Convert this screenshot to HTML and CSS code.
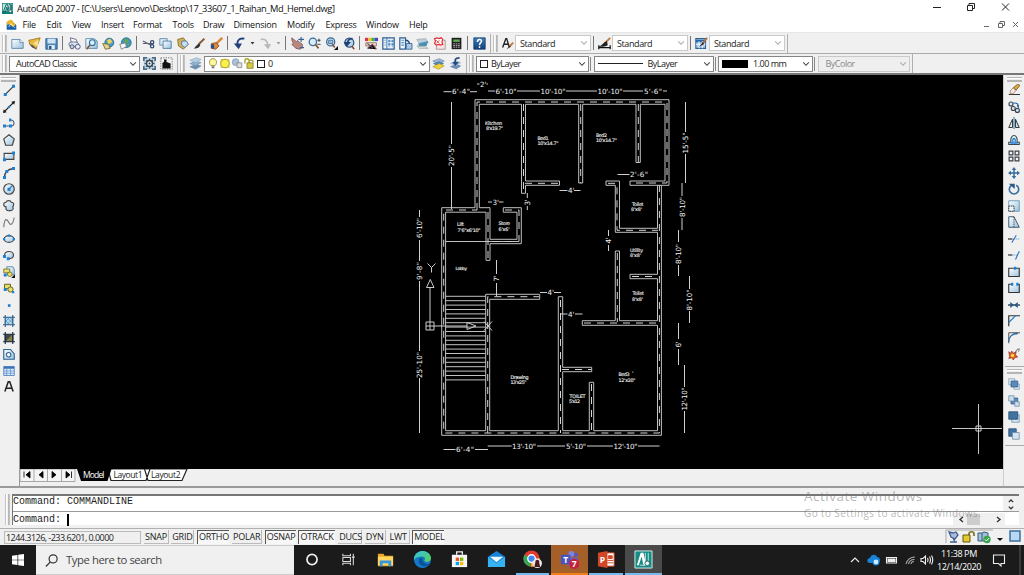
FILE: index.html
```html
<!DOCTYPE html>
<html lang="en">
<head>
<meta charset="utf-8">
<title>AutoCAD 2007</title>
<link rel="stylesheet" href="styles.css">
</head>
<body>
<svg class="sprite" xmlns="http://www.w3.org/2000/svg">
  <defs>
    <linearGradient id="pg" x1="0" y1="0" x2="1" y2="1"><stop offset="0" stop-color="#fff"/><stop offset="1" stop-color="#9cc3de"/></linearGradient>
    <linearGradient id="bl" x1="0" y1="0" x2="0" y2="1"><stop offset="0" stop-color="#3f7fbd"/><stop offset="1" stop-color="#0d3f78"/></linearGradient>
    <linearGradient id="eg" x1="0" y1="0" x2="1" y2="1"><stop offset="0" stop-color="#2fc3e8"/><stop offset="1" stop-color="#5fd04e"/></linearGradient>
  </defs>
  <symbol id="acad" viewBox="0 0 16 16"><path d="M0 0h16v16H0z" fill="#0f7f7a"/><path d="M1 1h14v11H1z" fill="#bfe6df"/><path d="M2 13L6 2h2l3 11H9L7 6l-2 7zM10 2h2v7l2 1V2" fill="none" stroke="#07625f" stroke-width="1.4"/><circle cx="12" cy="12" r="2" fill="#e9f7f4" stroke="#145f5c"/></symbol>
  <symbol id="dwg" viewBox="0 0 16 16"><path d="M1 4h9l5 4v7H1z" fill="#1660ad"/><path d="M2 2l6-2 6 8-4 3L5 7 1 8z" fill="#f0b429"/><path d="M4 11l3-5 6 6" fill="none" stroke="#fff"/></symbol>
  <symbol id="new" viewBox="0 0 16 16"><path d="M1 3h10l4 4v7H1z" fill="url(#pg)" stroke="#4d7fa3"/><path d="M11 3v4h4" fill="#fff" stroke="#4d7fa3"/></symbol>
  <symbol id="open" viewBox="0 0 16 16"><path d="M1 4l5-1 9-2-3 8-2 6-8-6z" fill="#e6b83c" stroke="#9b741a"/><path d="M6 8l7-5-1 9z" fill="#f8df8b"/><path d="M2 9l4 1 5 5-6-2z" fill="#555"/></symbol>
  <symbol id="save" viewBox="0 0 16 16"><path d="M1 2h14v13H1z" fill="#4f86b8" stroke="#27588a"/><path d="M3 2h10v6H3z" fill="#cfe4f6"/><path d="M4 10h8v5H4z" fill="#e8eef4"/><path d="M5 11h3v4H5z" fill="#27588a"/></symbol>
  <symbol id="print" viewBox="0 0 16 16"><path d="M3 1l7 2 2 5-8-1z" fill="#fff" stroke="#557"/><ellipse cx="7" cy="9" rx="6" ry="3" fill="#dfe7f2" stroke="#445a7d"/><circle cx="5" cy="12" r="2.5" fill="#bcd" stroke="#446"/><circle cx="12" cy="12" r="3" fill="#e9eef7" stroke="#446"/></symbol>
  <symbol id="prev" viewBox="0 0 16 16"><path d="M1 2h10l4 3v9H1z" fill="url(#pg)" stroke="#4d7fa3"/><circle cx="9" cy="7" r="3.5" fill="#d9f0ff" stroke="#2c6799" stroke-width="1.3"/><path d="M6 10l-4 5" stroke="#8d5a32" stroke-width="2"/></symbol>
  <symbol id="publish" viewBox="0 0 16 16"><circle cx="9" cy="7" r="5.5" fill="#4c9bc9" stroke="#20608c"/><path d="M6 4l4-2 3 4-5 3z" fill="#eed54e"/><path d="M1 8l7 1 2 5-6 1z" fill="#e6d68d" stroke="#746321"/></symbol>
  <symbol id="globe" viewBox="0 0 16 16"><circle cx="9" cy="7" r="6" fill="#3e97c4" stroke="#1f6a91"/><path d="M6 3l4-1 2 4-3 2zM9 9l4-1-1 4z" fill="#68a843"/><path d="M1 9l7-2 1 5-6 3z" fill="#f3f6fa" stroke="#777"/></symbol>
  <symbol id="cut" viewBox="0 0 16 16"><path d="M1 5l10 5M1 8h10" stroke="#5f6670" stroke-width="1.500"/><circle cx="12.500" cy="6.500" r="2" fill="none" stroke="#334770" stroke-width="1.500"/><circle cx="12.500" cy="11.500" r="2" fill="none" stroke="#334770" stroke-width="1.500"/></symbol>
  <symbol id="copy" viewBox="0 0 16 16"><path d="M1 2h9v8H1z" fill="#dcebf6" stroke="#5181a5"/><path d="M5 5h10v9H5z" fill="url(#pg)" stroke="#3f729b"/></symbol>
  <symbol id="paste" viewBox="0 0 16 16"><path d="M2 3l7-2 6 8-6 6-6-4z" fill="#d3b257" stroke="#80672a"/><path d="M7 5h6l2 4-4 4-4-3z" fill="#c9dcf0" stroke="#4974a0"/></symbol>
  <symbol id="brush" viewBox="0 0 16 16"><path d="M14 2L7 9" stroke="#8a5a35" stroke-width="2.5"/><path d="M8 8l1 2c-2 4-5 4-8 4 3-2 3-5 7-6z" fill="#333"/></symbol>
  <symbol id="bedit" viewBox="0 0 16 16"><path d="M15 1L8 8" stroke="#e0842c" stroke-width="3"/><path d="M2 8l6-1 3 4-4 4-5-1z" fill="#d98a3b" stroke="#8a3e15"/><path d="M1 9h4v5H1z" fill="#2e4f82"/></symbol>
  <symbol id="undo" viewBox="0 0 16 16"><path d="M14 2C7 1 4 5 6 12" fill="none" stroke="#223f7c" stroke-width="2.2"/><path d="M1 8h10l-4 7z" fill="#223f7c"/></symbol>
  <symbol id="redo" viewBox="0 0 16 16"><path d="M2 3c6-1 9 2 9 8" fill="none" stroke="#b8b8b8" stroke-width="2"/><path d="M6 9h9l-4 6z" fill="#b8b8b8"/></symbol>
  <symbol id="pan" viewBox="0 0 16 16"><path d="M1 1l6 5 1-2 3 3 3 2v4l-3 2-5-1-5-5 2-1-2-4z" fill="#b98780" stroke="#805856"/><path d="M9 3h7M12.500 0v6M11 13h5" stroke="#33629b" stroke-width="1.400"/></symbol>
  <symbol id="zoomr" viewBox="0 0 16 16"><circle cx="6" cy="6" r="4.5" fill="#d8ecfa" stroke="#356a98" stroke-width="1.5"/><path d="M9 9l4 5" stroke="#805332" stroke-width="2"/><path d="M11.500 4h4M13.500 2v4M11.500 9h4" stroke="#222"/></symbol>
  <symbol id="zoomw" viewBox="0 0 16 16"><circle cx="7" cy="6" r="5" fill="#c5e0f3" stroke="#356a98" stroke-width="1.5"/><path d="M4.500 4h5v4h-5z" fill="#9dbcd5" stroke="#446b90"/><path d="M9 9l3 4" stroke="#805332" stroke-width="2"/><path d="M16 11v5h-5z" fill="#111"/></symbol>
  <symbol id="zoomp" viewBox="0 0 16 16"><circle cx="9" cy="7" r="5.500" fill="#b9d8ee" stroke="#31577f" stroke-width="1.600"/><path d="M13 2C8 2 7 4 7 8" fill="none" stroke="#203f78" stroke-width="2.200"/><path d="M2 6h9L6 12z" fill="#203f78"/><path d="M12 11l3 4" stroke="#805332" stroke-width="2"/></symbol>
  <symbol id="props" viewBox="0 0 16 16"><path d="M0 1h4v4H0z" fill="#e22f50"/><path d="M4 1h4v4H4z" fill="#f2c320"/><path d="M8 1h4v4H8z" fill="#32b34a"/><path d="M12 1h4v4h-4z" fill="#5141c9"/><path d="M1 7h13v4H1z" fill="#f4e0d0" stroke="#8d6257"/><path d="M3 14l6-5 5 6M3 8l7 6" stroke="#6b4c5e" stroke-width="1.3"/></symbol>
  <symbol id="dc" viewBox="0 0 16 16"><path d="M1 1h14v14H1z" fill="#edf5fb" stroke="#315f91" stroke-width="1.5"/><path d="M6 1v14" stroke="#315f91"/><path d="M2 4h3M2 7h3M2 10h3M8 4h2v2H8zM12 4h2v2h-2zM8 8h2v2H8zM12 8h2v2h-2zM8 12h2M12 12h2" fill="#4b8bc2" stroke="#4b8bc2" stroke-width=".7"/></symbol>
  <symbol id="tp" viewBox="0 0 16 16"><path d="M1 1h7v14H1z" fill="#edf5fb" stroke="#315f91" stroke-width="1.5"/><path d="M3 4h3M3 7h3M3 10h3" stroke="#4b8bc2" stroke-width="1.5"/><path d="M8 4c4 0 5 2 5 6" fill="none" stroke="#1f4a80" stroke-width="1.6"/><path d="M9 8h7v7H9z" fill="#a9c9e4" stroke="#315f91"/></symbol>
  <symbol id="ssm" viewBox="0 0 16 16"><path d="M1 3l11-1 3 5-11 1z" fill="#bcd0dc" stroke="#9cadb9"/><path d="M3 8l12-3-2 6-10 2z" fill="#4d8fb3"/><path d="M1 11l11 1 3 2H4z" fill="#d9dfd8" stroke="#a6b1b8"/></symbol>
  <symbol id="markup" viewBox="0 0 16 16"><path d="M5 4h10v11H4z" fill="#f7e4e4" stroke="#9f8a8a"/><path d="M2 2l3-1 2 1 3-1 2 2-1 3 1 3-3 1-2-1-3 1-2-2 1-3z" fill="#fff" stroke="#e22e34" stroke-width="1.5"/><path d="M4 4l4 4M8 4L4 8" stroke="#e22e34"/></symbol>
  <symbol id="calc" viewBox="0 0 16 16"><path d="M2 1h12v14H2z" fill="#221d1d"/><path d="M4 3h8v3H4z" fill="#5fae55"/><path d="M4 8h2v1H4zM7 8h2v1H7zM10 8h2v1h-2zM4 10h2v1H4zM7 10h2v1H7zM10 10h2v1h-2zM4 12h2v1H4zM7 12h2v1H7zM10 12h2v1h-2z" fill="#ddd"/></symbol>
  <symbol id="help" viewBox="0 0 16 16"><path d="M1 1h14v14H1z" fill="url(#bl)" stroke="#163f6b"/><path d="M5.500 6c0-4 5-3.500 5-1 0 2-2.500 2-2.500 5M8 11.500v2" fill="none" stroke="#fff" stroke-width="1.8"/></symbol>
  <symbol id="tstyle" viewBox="0 0 16 16"><path d="M2 13L6 2h1l3 10M4 9h5" fill="none" stroke="#222" stroke-width="1.7"/><path d="M15 7l-5 5" stroke="#c07a3e" stroke-width="2.2"/><path d="M11 10l-4 5 5-3z" fill="#222"/></symbol>
  <symbol id="dstyle" viewBox="0 0 16 16"><path d="M1 10v5M15 10v5M1 13h14" stroke="#111" stroke-width="1.5"/><path d="M15 1L8 8" stroke="#c07a3e" stroke-width="2.200"/><path d="M11 5l1 5c-3 2-9 2-12 2 5-1 6-5 11-7z" fill="#222"/></symbol>
  <symbol id="tbstyle" viewBox="0 0 16 16"><path d="M1 2h12v12H1z" fill="#a7cbea" stroke="#2d6293" stroke-width="1.300"/><path d="M1 5h12" stroke="#2867ab" stroke-width="3"/><path d="M1 9h12M5 5v9M9 5v9" stroke="#fff"/><path d="M15 1L9 8" stroke="#b7713a" stroke-width="2.200"/><path d="M10 6l1 3-6 3z" fill="#222"/></symbol>
  <symbol id="gearbox" viewBox="0 0 16 16"><path d="M0 0h16v16H0z" fill="#4a6c87"/><path d="M2 2h12v12H2z" fill="#c3d3df"/><path d="M0 5h2v6H0zM14 5h2v6h-2zM5 0h6v2H5zM5 14h6v2H5z" fill="#dbe5ec"/><circle cx="8" cy="8" r="3.700" fill="#eef3f6" stroke="#344b5e" stroke-width="1.800"/><circle cx="8" cy="8" r="1.200" fill="#263b4c"/><path d="M8 2v2.500M8 11.500V14M2 8h2.500M11.500 8H14M4 4l1.500 1.500M10.500 10.500L12 12M12 4l-1.500 1.500M4 12l1.500-1.500" stroke="#344b5e" stroke-width="1.400"/></symbol>
  <symbol id="house" viewBox="0 0 16 16"><path d="M1 1h14v14H1z" fill="none" stroke="#555" stroke-dasharray="1.500 1.500"/><path d="M3 14V7l2-1V3h3v3l5 2v6z" fill="#111"/></symbol>
  <symbol id="layers" viewBox="0 0 16 16"><path d="M1 12l8-3 6 2-7 4z" fill="#6f8faf" stroke="#6584a3" stroke-width=".6"/><path d="M1 8l8-3 6 2-7 4z" fill="#8fb1d1" stroke="#6584a3" stroke-width=".6"/><path d="M1 4l8-3 6 2-7 4z" fill="#b7cfe4" stroke="#7d9bb9" stroke-width=".6"/></symbol>
  <symbol id="laym" viewBox="0 0 16 16"><path d="M1 5l8-3 6 3-7 4z" fill="#9dbcd8" stroke="#587393" stroke-width=".7"/><path d="M1 8l8-3 6 3-7 4z" fill="#5283b7"/><path d="M1 12l8-4 6 3-7 4z" fill="#f0d33c" stroke="#a98e1c" stroke-width=".7"/></symbol>
  <symbol id="layp" viewBox="0 0 16 16"><path d="M1 12l8-4 6 3-6 4z" fill="#6c8fb4"/><path d="M1 8l8-4 6 3-6 4z" fill="#a2bfd9"/><path d="M13 1C7 1 7 4 8 8" fill="none" stroke="#27487e" stroke-width="2"/><path d="M4 6h8l-4 5z" fill="#27487e"/></symbol>
  <symbol id="bulb" viewBox="0 0 16 16"><path d="M5 11C1 7 3 1 8 1s7 6 3 10z" fill="#fdf6a5" stroke="#978c31" stroke-width="1.300"/><path d="M6 12h4v3H6z" fill="#777"/></symbol>
  <symbol id="sun" viewBox="0 0 16 16"><path d="M1.500 1.500h13v13h-13z" fill="#d8cf72"/><circle cx="8" cy="8" r="6.300" fill="#f8f14c" stroke="#a28d1d" stroke-width="1.200"/></symbol>
  <symbol id="vp" viewBox="0 0 16 16"><circle cx="6" cy="6" r="5" fill="#a9c2d8" stroke="#7894ad"/><path d="M8 7h7v7H8z" fill="#ddd" stroke="#778"/></symbol>
  <symbol id="lock" viewBox="0 0 16 16"><path d="M2 8V4c0-4 6-4 6 0M8 8V6c0-4 6-4 6 0" fill="none" stroke="#a9a12c" stroke-width="2"/><path d="M5 7h9v8H5z" fill="#d4ca3d" stroke="#77701c"/></symbol>
  <symbol id="chev" viewBox="0 0 10 10"><path d="M1.500 3L5 6.700 8.500 3" fill="none" stroke="currentColor" stroke-width="1.300"/></symbol>
  <symbol id="line" viewBox="0 0 16 16"><path d="M3 14L14 3" stroke="#444" stroke-width="1.500"/><path d="M1 12h4v4H1zM12 1h4v4h-4z" fill="#1f7fd0"/></symbol>
  <symbol id="xline" viewBox="0 0 16 16"><path d="M1 15L15 1" stroke="#222" stroke-width="1.500"/><path d="M0 16l1-5 4 4zM16 0l-1 5-4-4z" fill="#222"/><path d="M6.500 6.500h3v3h-3z" fill="#1f7fd0"/></symbol>
  <symbol id="pline" viewBox="0 0 16 16"><path d="M1 12h10c5 0 5-8-1-8" fill="none" stroke="#445b70" stroke-width="1.500"/><path d="M0 10h4v4H0zM8 10h4v4H8zM8 2h3v4H8z" fill="#1f7fd0"/></symbol>
  <symbol id="poly" viewBox="0 0 16 16"><path d="M8 1l7 5.500L12.500 15h-9L1 6.500z" fill="url(#pg)" stroke="#444" stroke-width="1.600"/></symbol>
  <symbol id="rect" viewBox="0 0 16 16"><path d="M1.500 4.500h13v8h-13z" fill="url(#pg)" stroke="#444" stroke-width="1.500"/><path d="M0 11h4v4H0zM12 2h4v4h-4z" fill="#1f7fd0"/></symbol>
  <symbol id="arc" viewBox="0 0 16 16"><path d="M2 14C2 7 6 3 14 2" fill="none" stroke="#444" stroke-width="1.700"/><path d="M0 12h4v4H0zM3 4h4v4H3zM12 0h4v4h-4z" fill="#1f7fd0"/></symbol>
  <symbol id="circ" viewBox="0 0 16 16"><circle cx="8" cy="8" r="7" fill="url(#pg)" stroke="#444" stroke-width="1.600"/><path d="M8 8l4-4" stroke="#1f7fd0" stroke-width="1.500"/><path d="M6 6.500h4v4H6z" fill="#1f7fd0"/></symbol>
  <symbol id="cloud" viewBox="0 0 16 16"><path d="M4 9C0 9 0 3 4 3c1-3 6-3 7 0 4 0 4 4 2 6 2 3-1 6-4 5-3 1-6-1-5-5z" fill="url(#pg)" stroke="#444" stroke-width="1.500"/></symbol>
  <symbol id="spline" viewBox="0 0 16 16"><path d="M1 15C2 0 6 5 8 9s5 3 7-7" fill="none" stroke="#777" stroke-width="1.500"/></symbol>
  <symbol id="ell" viewBox="0 0 16 16"><ellipse cx="8" cy="8" rx="6.500" ry="4.500" fill="url(#pg)" stroke="#444" stroke-width="1.500"/><path d="M0 6.500h3v3H0zM13 6.500h3v3h-3zM6.500 2h3v3h-3z" fill="#1f7fd0"/></symbol>
  <symbol id="ella" viewBox="0 0 16 16"><path d="M2 9c0-8 12-7 12-1 0 4-4 5-7 5" fill="url(#pg)" stroke="#444" stroke-width="1.500"/><path d="M0 8h4v4H0zM5 11h4v4H5z" fill="#1f7fd0"/></symbol>
  <symbol id="ins" viewBox="0 0 16 16"><path d="M5 1h8l2 3v8H6z" fill="url(#pg)" stroke="#3f729b"/><path d="M1 4h8v5H1z" fill="#e8e06c" stroke="#66601e"/><circle cx="9" cy="11" r="3" fill="#e8e06c" stroke="#66601e"/><path d="M1 10h4v4H1z" fill="#1f7fd0"/><path d="M16 11v5h-5z" fill="#111"/></symbol>
  <symbol id="blk" viewBox="0 0 16 16"><path d="M2 3h8v6H2z" fill="#e8e06c" stroke="#66601e" stroke-width="1.300"/><circle cx="10" cy="10" r="3.500" fill="#e8e06c" stroke="#66601e" stroke-width="1.300"/><path d="M1 8h4v4H1zM12 12h3v3h-3z" fill="#1f7fd0"/></symbol>
  <symbol id="pt" viewBox="0 0 16 16"><path d="M6.500 7h3.500v3.500H6.500z" fill="#1f7fd0"/></symbol>
  <symbol id="hatch" viewBox="0 0 16 16"><path d="M2 3h12v10H2z" fill="#b6d8ee"/><path d="M2 6l7 7M5 3l9 9M9 3l5 5M2 10l7-7M5 13l9-9" stroke="#5292c3"/><path d="M0 3h16M0 13h16M3 0v16M13 0v16" stroke="#265985" stroke-width="1.400"/></symbol>
  <symbol id="grad" viewBox="0 0 16 16"><path d="M2 3h12v10H2z" fill="#43484b"/><path d="M4 12l8-8v8z" fill="#8b8246"/><path d="M0 3h16M0 13h16M3 0v16M13 0v16" stroke="#182c40" stroke-width="1.500"/></symbol>
  <symbol id="region" viewBox="0 0 16 16"><path d="M1 2h9l5 6v7H1z" fill="url(#pg)" stroke="#2d6293" stroke-width="1.500"/><circle cx="7.500" cy="9" r="3" fill="#fff" stroke="#2d6293" stroke-width="1.500"/></symbol>
  <symbol id="table" viewBox="0 0 16 16"><path d="M1 2h14v12H1z" fill="#d9eafa" stroke="#3b73b8"/><path d="M1 3.500h14" stroke="#3b73b8" stroke-width="3"/><path d="M1 8h14M1 11h14M5 4v10M10 4v10" stroke="#5d92cc"/></symbol>
  <symbol id="mtext" viewBox="0 0 16 16"><path d="M2.500 14L7 1h2l4.500 13M4 9.500h8" fill="none" stroke="#222" stroke-width="2"/></symbol>
  <symbol id="erase" viewBox="0 0 16 16"><path d="M1 14h15" stroke="#333" stroke-width="1.400"/><path d="M3 9l4-4 4 3-4 5H3z" fill="#f2e6e0" stroke="#a5705c"/><path d="M7 5l6-5 3 2-5 6z" fill="#d6aa3b" stroke="#6b541c"/></symbol>
  <symbol id="cpy" viewBox="0 0 16 16"><g fill="#dce9f2" stroke="#39444e" stroke-width="1.500"><circle cx="4" cy="4" r="2.700"/><circle cx="7" cy="10" r="2.700"/><circle cx="12.500" cy="12.500" r="2.700"/></g><path d="M7 3c5-1 7 1 7 5l-2-2" fill="none" stroke="#1e66a7" stroke-width="1.500"/></symbol>
  <symbol id="mirror" viewBox="0 0 16 16"><path d="M1 14L6 3v11z" fill="#eee" stroke="#333" stroke-width="1.300"/><path d="M15 14L10 3v11z" fill="#c2dff3" stroke="#333" stroke-width="1.300"/><path d="M8 0v16" stroke="#1c69a8" stroke-width="1.300"/></symbol>
  <symbol id="offset" viewBox="0 0 16 16"><path d="M1 14v-3h3c-2-12 10-12 8 0h3v3z" fill="#e5f0f8" stroke="#3b4853" stroke-width="1.500"/><path d="M3 12h4c-3-8 5-8 2 0h4" fill="none" stroke="#1f7fd0" stroke-width="1.700"/></symbol>
  <symbol id="array" viewBox="0 0 16 16"><path d="M1.500 1.500h5v5h-5zM9.500 1.500h5v5h-5zM1.500 9.500h5v5h-5zM9.500 9.500h5v5h-5z" fill="#edf5fa" stroke="#3d4045" stroke-width="1.600"/></symbol>
  <symbol id="move" viewBox="0 0 16 16"><path d="M8 2v12M2 8h12" stroke="#356c9c" stroke-width="2"/><path d="M8 0l3 4H5zM8 16l3-4H5zM0 8l4-3v6zM16 8l-4-3v6z" fill="#356c9c"/></symbol>
  <symbol id="rotate" viewBox="0 0 16 16"><path d="M5 3a6.200 6.200 0 1 0 6 0" fill="none" stroke="#39719f" stroke-width="2.200"/><path d="M1 1h8v7z" fill="#285a86"/></symbol>
  <symbol id="scale" viewBox="0 0 16 16"><path d="M1 1h14v14H1z" fill="url(#pg)" stroke="#4b84ad"/><path d="M1 8h7v7H1z" fill="#eef3f7" stroke="#333" stroke-dasharray="2 1" stroke-width="1.300"/></symbol>
  <symbol id="stretch" viewBox="0 0 16 16"><path d="M1 1h7l7 14H1z" fill="url(#pg)" stroke="#3c5970" stroke-width="1.300"/><path d="M8 1v14" stroke="#333" stroke-dasharray="2 1"/></symbol>
  <symbol id="trim" viewBox="0 0 16 16"><path d="M0 8h6" stroke="#222" stroke-width="1.500"/><path d="M7 8h9" stroke="#4795d3" stroke-dasharray="2 1"/><path d="M5 13l6-10" stroke="#1f70c0" stroke-width="1.400"/></symbol>
  <symbol id="extend" viewBox="0 0 16 16"><path d="M0 8h6" stroke="#222" stroke-width="1.500"/><path d="M7 8h5" stroke="#4795d3" stroke-dasharray="2 1"/><path d="M10 14l5-11" stroke="#1f70c0" stroke-width="1.400"/></symbol>
  <symbol id="break1" viewBox="0 0 16 16"><path d="M1 3h14v11H1z" fill="url(#pg)" stroke="#333" stroke-width="1.500"/><path d="M8 1h3v4H8z" fill="#1f7fd0"/></symbol>
  <symbol id="break2" viewBox="0 0 16 16"><path d="M1 3h14v11H1z" fill="url(#pg)"/><path d="M4 3H1v11h14V3h-3" fill="none" stroke="#333" stroke-width="1.500"/><path d="M4 1h3v4H4zM11 1h3v4h-3z" fill="#1f7fd0"/></symbol>
  <symbol id="join" viewBox="0 0 16 16"><path d="M0 8h16" stroke="#222" stroke-width="1.600"/><path d="M3 4l5 4-5 4zM13 4L8 8l5 4z" fill="#235b8f"/></symbol>
  <symbol id="chamfer" viewBox="0 0 16 16"><path d="M1 15V1h15" fill="none" stroke="#333" stroke-width="1.600"/><path d="M1 10l9-9" stroke="#1f7fd0" stroke-width="1.500"/></symbol>
  <symbol id="fillet" viewBox="0 0 16 16"><path d="M1 15V1h15" fill="none" stroke="#444" stroke-width="1.200"/><path d="M1 13C1 6 6 2 13 2" fill="none" stroke="#2166a4" stroke-width="1.700"/></symbol>
  <symbol id="explode" viewBox="0 0 16 16"><path d="M1 5l3 2 1-3 2 3 4-2-1 4 3 3-4 1-2 3-2-3-4 1 1-3z" fill="#e05b24" stroke="#7d2b17" stroke-width=".8"/><circle cx="6" cy="10" r="2.200" fill="#f9d84a"/><path d="M9 7l3-5 3-1-1 4" fill="none" stroke="#555"/></symbol>
  <symbol id="front" viewBox="0 0 16 16"><path d="M1 1h8v8H1z" fill="#e6eef5" stroke="#7b98ae"/><path d="M8 8h7v7H8z" fill="#e6eef5" stroke="#7b98ae"/><path d="M4 4h9v8H4z" fill="#5b8cb9" stroke="#2d5f90"/></symbol>
  <symbol id="back" viewBox="0 0 16 16"><path d="M4 4h9v8H4z" fill="#5b8cb9" stroke="#2d5f90"/><path d="M1 1h7v7H1z" fill="#cfdde8" stroke="#6c8ba5"/><path d="M9 9h6v6H9z" fill="#cfdde8" stroke="#6c8ba5"/></symbol>
  <symbol id="above" viewBox="0 0 16 16"><path d="M5 5h10v10H5z" fill="#d4e4f1" stroke="#6c8ba5"/><path d="M1 1h12v10H1z" fill="#40729f" stroke="#244c73"/></symbol>
  <symbol id="under" viewBox="0 0 16 16"><path d="M1 1h10v10H1z" fill="#40729f" stroke="#244c73"/><path d="M6 6h9v9H6z" fill="#d4e4f1" stroke="#6c8ba5"/></symbol>
</svg>

<header class="titlebar">
  <svg class="app-icon"><use href="#acad"/></svg>
  <span class="title">AutoCAD 2007 - [C:\Users\Lenovo\Desktop\17_33607_1_Raihan_Md_Hemel.dwg]</span>
  <svg class="win-buttons" viewBox="0 0 100 17" fill="none" stroke="#222"><path d="M9 7.500h8M43.500 5.500h5v5h-5zM45 5.500V3.500h5.500v5H49M78 3.500l7 7M85 3.500l-7 7"/></svg>
</header>
<nav class="menubar">
  <svg class="dwg-icon"><use href="#dwg"/></svg>
  <span>File</span><span>Edit</span><span>View</span><span>Insert</span><span>Format</span><span>Tools</span><span>Draw</span><span>Dimension</span><span>Modify</span><span>Express</span><span>Window</span><span>Help</span>
  <svg class="mdi" viewBox="0 0 44 15" fill="none" stroke="#666"><path d="M4 9.500h5M18.500 6.500h4v4h-4zM20 6.500v-2h4.500v4H23M33 5l5 5M38 5l-5 5"/></svg>
</nav>

<div class="toolbar row1">
  <i class="grip"></i>
  <svg class="ic"><use href="#new"/></svg><svg class="ic"><use href="#open"/></svg><svg class="ic"><use href="#save"/></svg><i class="sep"></i>
  <svg class="ic"><use href="#print"/></svg><svg class="ic"><use href="#prev"/></svg><svg class="ic"><use href="#publish"/></svg><svg class="ic"><use href="#globe"/></svg><i class="sep"></i>
  <svg class="ic"><use href="#cut"/></svg><svg class="ic"><use href="#copy"/></svg><svg class="ic"><use href="#paste"/></svg><svg class="ic"><use href="#brush"/></svg><svg class="ic"><use href="#bedit"/></svg><i class="sep"></i>
  <svg class="ic"><use href="#undo"/></svg><i class="drop"></i><svg class="ic"><use href="#redo"/></svg><i class="drop off"></i><i class="sep"></i>
  <svg class="ic"><use href="#pan"/></svg><svg class="ic"><use href="#zoomr"/></svg><svg class="ic"><use href="#zoomw"/></svg><svg class="ic"><use href="#zoomp"/></svg><i class="sep"></i>
  <svg class="ic"><use href="#props"/></svg><svg class="ic"><use href="#dc"/></svg><svg class="ic"><use href="#tp"/></svg><svg class="ic"><use href="#ssm"/></svg><svg class="ic"><use href="#markup"/></svg><svg class="ic"><use href="#calc"/></svg><i class="sep"></i>
  <svg class="ic"><use href="#help"/></svg>
  <i class="edge"></i><i class="grip"></i>
  <svg class="ic st"><use href="#tstyle"/></svg><div class="combo soft">Standard<svg class="ch"><use href="#chev"/></svg></div><i class="sep"></i>
  <svg class="ic st"><use href="#dstyle"/></svg><div class="combo soft">Standard<svg class="ch"><use href="#chev"/></svg></div><i class="sep"></i>
  <svg class="ic st"><use href="#tbstyle"/></svg><div class="combo soft">Standard<svg class="ch"><use href="#chev"/></svg></div><i class="edge"></i>
</div>
<div class="toolbar row2">
  <i class="grip"></i>
  <div class="combo ws">AutoCAD Classic<svg class="ch"><use href="#chev"/></svg></div>
  <svg class="ic"><use href="#gearbox"/></svg><svg class="ic"><use href="#house"/></svg>
  <i class="edge"></i><i class="grip"></i>
  <svg class="ic"><use href="#layers"/></svg>
  <div class="combo layer"><svg class="mini"><use href="#bulb"/></svg><svg class="mini"><use href="#sun"/></svg><svg class="mini"><use href="#vp"/></svg><svg class="mini"><use href="#lock"/></svg><i class="swatch"></i>0<svg class="ch"><use href="#chev"/></svg></div>
  <svg class="ic"><use href="#laym"/></svg><svg class="ic"><use href="#layp"/></svg>
  <i class="edge"></i><i class="grip"></i>
  <div class="combo color"><i class="swatch"></i>ByLayer<svg class="ch"><use href="#chev"/></svg></div><i class="sep thin"></i>
  <div class="combo ltype"><i class="rule"></i>ByLayer<svg class="ch"><use href="#chev"/></svg></div><i class="sep thin"></i>
  <div class="combo lweight"><i class="bar"></i>1.00 mm<svg class="ch"><use href="#chev"/></svg></div><i class="sep thin"></i>
  <div class="combo plot soft">ByColor<svg class="ch"><use href="#chev"/></svg></div><i class="edge"></i>
</div>

<main class="work">
  <aside class="palette left">
    <i class="hgrip"></i>
    <svg><use href="#line"/></svg><svg><use href="#xline"/></svg><svg><use href="#pline"/></svg><svg><use href="#poly"/></svg><svg><use href="#rect"/></svg><svg><use href="#arc"/></svg><svg><use href="#circ"/></svg><svg><use href="#cloud"/></svg><svg><use href="#spline"/></svg><svg><use href="#ell"/></svg><svg><use href="#ella"/></svg><svg><use href="#ins"/></svg><svg><use href="#blk"/></svg><svg><use href="#pt"/></svg><svg><use href="#hatch"/></svg><svg><use href="#grad"/></svg><svg><use href="#region"/></svg><svg><use href="#table"/></svg><svg><use href="#mtext"/></svg>
  </aside>
  <section class="center">
    <svg class="canvas" viewBox="20 75 983 394">
      <g class="wall">
        <path d="M475 207.700V99.700H669V185.300H630V181H665V104.300H640.300V162.500H636V104.300H582.700V183H578.700V104.300H525.500V181H559.500V185.300H525.500V193.300H521.500V104.300H479.300V207.700H490V239.300H517V212.200H503.300V207.700H521.300V243.700H490V260.300H486V212.200H445.600V430.700H485.700V294.300H539.700V299.300H489.700V430.700H558.300V296.700H562.700V367.300H591.700V371.700H562.700V430.700H589.300V382.300H593.700V430.700H657.500V325.300H582.300V320.700H615.300V251H619.500V320.700H657.500V278.700H630V274.300H657.500V232.300H615.300V185.300H606V181H619.500V228.300H657.500V185.300M661.400 185.300V435.300H441.700V207.700H475M445.600 241.500H519"/>
        <path d="M445.600 296.300H485.700M445.600 300.700h40M445.600 305.100h40M445.600 309.500h40M445.600 313.900h40M445.600 318.300h40M445.600 322.700h40M445.600 327.100h40M445.600 331.500h40M445.600 335.900h40M445.600 340.300h40M445.600 344.700h40M445.600 349.100h40M445.600 353.500h40M445.600 357.900h40M445.600 362.300h40M445.600 366.700h40M445.600 371.100h40M445.600 375.500h40M445.600 379.900h40"/>
      </g>
      <path class="mid" d="M477 210V102H667V183H630M523.500 104v88M525 183.300h34M580.700 104v79M638.300 104v58M608 183.300h9v47h41M659.400 185V433H443.700V210H477M488 212v48M505 210h14v31.500h-29M487.700 433V296.700H539M560.500 300V433M562 369.500h29M591.500 384v49M584 323h74M617.300 253v69M632 276.500h26"/>
      <g class="dimline">
        <path d="M443.500 91.700h8M470 91.700h7M477 84h2.500M486.500 84h1.500M488 91h7M517 91h23M566 91h31M623 91h20M663 91h4M488 202h4M499 202h4.500M559.500 190.500h8M574 190.500h6.500M617.500 174.500h12M540 292.500h7M554 292.500h7M560.500 314h7M575 314h7.500M443.500 449.500h12M475 449.500h13M487.700 446h24M537 446h28M587 446h26M638 446h21.500"/>
        <path d="M451.500 102v42M451.500 167v42M419.500 210v7M419.500 240v21M419.500 281v70M419.500 378v55M527.300 193v5M527.300 206v4M496.500 260v14M496.500 283v13M608.500 230v6M608.500 245v6M685.500 102v30M685.500 154v29M682 183v13M682 218v12M678.500 230v12M678.500 265v11M689.500 276v13M689.500 311v12M678.500 323v16M678.500 349v16M684.500 365v22M684.500 411v22"/>
      </g>
      <g class="dim">
        <text x="452" y="94.300" textLength="18">6'-4"</text><text x="480" y="86.700" textLength="6.500">2'</text><text x="495.500" y="93.700" textLength="21">6'-10"</text><text x="540.500" y="93.700" textLength="25">10'-10"</text><text x="597.500" y="93.700" textLength="25">10'-10"</text><text x="644" y="93.700" textLength="18">5'-6"</text>
        <text x="492.500" y="204.700" textLength="6.500">3'</text><text x="568" y="193.200" textLength="6.500">4'</text><text x="630" y="177.200" textLength="18">2'-6"</text><text x="547.500" y="295.200" textLength="6.500">4'</text><text x="568" y="316.700" textLength="6.500">4'</text><text x="456" y="452.200" textLength="18">6'-4"</text><text x="512" y="448.700" textLength="24">13'-10"</text><text x="566" y="448.700" textLength="20">5'-10"</text><text x="613.500" y="448.700" textLength="24">12'-10"</text>
        <text transform="translate(454.300 166)rotate(-90)" textLength="21">20'-5"</text><text transform="translate(422.300 238)rotate(-90)" textLength="20">6'-10"</text><text transform="translate(422.300 280)rotate(-90)" textLength="18">9'-8"</text><text transform="translate(422.300 378)rotate(-90)" textLength="26">25'-10"</text><text transform="translate(530 205.500)rotate(-90)" textLength="6">3'</text><text transform="translate(499.300 281.500)rotate(-90)" textLength="6">7'</text><text transform="translate(611.300 243.500)rotate(-90)" textLength="6">4'</text>
        <text transform="translate(688.300 153.500)rotate(-90)" textLength="21">15'-5"</text><text transform="translate(684.800 217)rotate(-90)" textLength="20">8'-10"</text><text transform="translate(681.300 264)rotate(-90)" textLength="20">8'-10"</text><text transform="translate(692.300 310.500)rotate(-90)" textLength="21">8'-10"</text><text transform="translate(681.300 347.500)rotate(-90)" textLength="6">6'</text><text transform="translate(687.300 410.500)rotate(-90)" textLength="23">12'-10"</text>
      </g>
      <g class="room">
        <text x="485" y="124.500" textLength="17">Kitchen</text><text x="486" y="129.700" textLength="17">8'x19.7"</text><text x="537.500" y="140" textLength="11">Bed1</text><text x="537.500" y="145.300" textLength="21">10'x14.7"</text><text x="596" y="137" textLength="11">Bed2</text><text x="596" y="142.300" textLength="21">10'x14.7"</text>
        <text x="632" y="206" textLength="11.500">Toilet</text><text x="631" y="211.300" textLength="11">8'x8'</text><text x="630" y="252" textLength="13">Utility</text><text x="630" y="257.300" textLength="11">8'x8'</text><text x="632.500" y="295.300" textLength="11.500">Toilet</text><text x="632" y="300.500" textLength="11">8'x8'</text>
        <text x="457" y="226.300" textLength="7">Lift</text><text x="457.500" y="231.500" textLength="23">7'6"x6'10"</text><text x="498.500" y="225.300" textLength="11.500">Store</text><text x="498.500" y="230.500" textLength="11">6'x6'</text><text x="455.500" y="270" textLength="11.500" font-size="4.300">Lobby</text><text x="510.500" y="379" textLength="18">Drawing</text><text x="510.500" y="384.300" textLength="16">13'x25"</text><text x="618.500" y="376.300" textLength="11">Bed3</text><text x="618.500" y="381.500" textLength="17">12'x20"</text><text x="569.500" y="398" textLength="16">TOILET</text><text x="569" y="403.300" textLength="11">5'x12</text><text x="632" y="375">'</text>
      </g>
      <path class="ucs" d="M426 322h8v8h-8zM426 326h8M430 330V288M426.500 287.500h7.500l-3.700-8zM434 326h33M467 322.500v7l9-3.500zM484 321.500l8 9M492 321.500l-8 9M427.500 263.500l4 4 4-4M431.500 267.500v5"/>
      <path class="cursor" d="M978.500 404v50M952 428.500h50M976 426h5v5h-5z"/>
    </svg>
    <svg class="tabs" viewBox="20 469 983 17">
      <path d="M20 469h55v12.500H20zM34 469v12M47.500 469v12M61.500 469v12" fill="#f4f4f4" stroke="#a8a8a8"/>
      <path d="M24 471.500v6M30 471.500v6.500l-4-3.200zM43 471.500v6.500l-4-3.200zM52 471.500v6.500l4-3.200zM66 471.500v6.500l4-3.200zM71.500 471.500v6.500" fill="#000" stroke="#000" stroke-width=".8"/>
      <path d="M148 480.500L144.500 469H187L182 480.500zM111 480.500L108 469H150L146 480.500z" fill="#fff" stroke="#222" stroke-width="1.200"/>
      <path d="M77 469H111.500L107.500 481H81z" fill="#000"/>
      <g class="tabtext"><text x="83" y="477.700" textLength="21.500" class="sel">Model</text><text x="113.500" y="477.700" textLength="29">Layout1</text><text x="151" y="477.700" textLength="29.500">Layout2</text></g>
    </svg>
  </section>
  <aside class="palette right">
    <i class="hgrip"></i>
    <svg><use href="#erase"/></svg><svg><use href="#cpy"/></svg><svg><use href="#mirror"/></svg><svg><use href="#offset"/></svg><svg><use href="#array"/></svg><svg><use href="#move"/></svg><svg><use href="#rotate"/></svg><svg><use href="#scale"/></svg><svg><use href="#stretch"/></svg><svg><use href="#trim"/></svg><svg><use href="#extend"/></svg><svg><use href="#break1"/></svg><svg><use href="#break2"/></svg><svg><use href="#join"/></svg><svg><use href="#chamfer"/></svg><svg><use href="#fillet"/></svg><svg><use href="#explode"/></svg>
    <i class="hline"></i><i class="hgrip second"></i>
    <svg><use href="#front"/></svg><svg><use href="#back"/></svg><svg><use href="#above"/></svg><svg><use href="#under"/></svg>
    <i class="hline"></i>
  </aside>
</main>

<section class="command">
  <i class="grip"></i>
  <div class="cmdbox">
    <div class="history"><span>Command: COMMANDLINE</span><svg class="vscroll" viewBox="0 0 17 17" fill="none" stroke="#333" stroke-width="1.400"><path d="M6 7l2.500-2.500L11 7M6 12l2.500 2.500L11 12"/></svg></div>
    <div class="prompt"><span>Command: <b class="caret"></b></span><svg class="hscroll" viewBox="0 0 52 14"><path d="M0 0h52v14H0z" fill="#f0f0f0"/><path d="M14 1h13v11H14z" fill="#cdcdcd"/><path d="M10 4L7 6.500 10 9M44 4l3 2.500L44 9" fill="none" stroke="#333" stroke-width="1.400"/></svg></div>
  </div>
  <div class="watermark"><p class="w1">Activate Windows</p><p class="w2">Go to Settings to activate Windows.</p></div>
</section>

<section class="status">
  <span class="coords">1244.3126, -233.6201, 0.0000</span>
  <div class="modes"><span>SNAP</span><span>GRID</span><span class="on">ORTHO</span><span>POLAR</span><span class="on">OSNAP</span><span class="on">OTRACK</span><span>DUCS</span><span>DYN</span><span>LWT</span><span class="on">MODEL</span></div>
  <svg class="tray-icons" viewBox="0 0 80 16"><path d="M1 14V1h47" fill="none" stroke="#aaa"/><path d="M4 3l4 1 3-1 2 3-3 4-4-2zM8 9l2 4M5 13h7" fill="#a8bddd" stroke="#405d91" stroke-width="1.300"/><path d="M24 7V5c0-3 5-3 5 0v2" fill="none" stroke="#7d7425" stroke-width="1.700"/><path d="M18 6h7v7h-7z" fill="#e2c92f" stroke="#65590f"/><path d="M33 4h4l2-1 4 1v8H33zM37 4v8" fill="#a4bfd6" stroke="#345c80"/><circle cx="42" cy="10.500" r="3.700" fill="#36a64b"/><path d="M40 10.500l1.500 1.500 2.500-3" fill="none" stroke="#fff"/><path d="M52 9h6l-3 3z" fill="#111"/><path d="M65 2h10v10H65z" fill="#b9d8f2" stroke="#396f9f" stroke-width="1.500"/></svg>
</section>

<footer class="taskbar">
  <div class="start"><svg viewBox="0 0 12 12"><path d="M0 1.700l5.500-.8v4.800H0zM6.200.8L12 0v5.700H6.200zM0 6.300h5.500v4.800L0 10.300zM6.200 6.300H12V12l-5.800-.8z" fill="#fff"/></svg></div>
  <div class="search"><svg viewBox="0 0 12 12"><circle cx="7.500" cy="4.500" r="3.700" fill="none" stroke="#333" stroke-width="1.100"/><path d="M5 7.300L.8 11.500" stroke="#333" stroke-width="1.200"/></svg><span>Type here to search</span></div>
  <div class="apps">
    <div><svg viewBox="0 0 20 20"><circle cx="9.500" cy="10" r="5.300" fill="none" stroke="#eee" stroke-width="1.800"/></svg></div>
    <div><svg viewBox="0 0 20 20" fill="none" stroke="#ddd" stroke-width="1.100"><path d="M3 4v2h8V4M3 16v-2h8v2M3 8h8v4H3zM14 4v12M12.500 7.500h3"/></svg></div>
    <div><svg viewBox="0 0 20 20"><path d="M2 4h6l1 2h9v11H2z" fill="#e8a928"/><path d="M2 7h16v9H2z" fill="#ffd75e"/><path d="M4 11h12v6h-3v-3H7v3H4z" fill="#3695dc"/></svg></div>
    <div><svg viewBox="0 0 20 20"><circle cx="10" cy="10" r="9" fill="#1479c9"/><path d="M1 9C2-1 17-2 19 8c0 6-7 5-7 3 2-3-1-5-4-4-3 0-6 1-7 4z" fill="url(#eg)"/><path d="M8 8c-5 5 0 10 6 9 2 0 3-2 4-3-4 2-9-1-8-5z" fill="#0b529c"/></svg></div>
    <div><svg viewBox="0 0 20 20"><path d="M7 5V2h6v3" fill="none" stroke="#eee" stroke-width="1.400"/><path d="M2 5h16v13H2z" fill="#f6f6f6"/><path d="M6 8h3.500v3.500H6z" fill="#f25022"/><path d="M10.500 8H14v3.500h-3.500z" fill="#7fba00"/><path d="M6 12.500h3.500V16H6z" fill="#00a4ef"/><path d="M10.500 12.500H14V16h-3.500z" fill="#ffb900"/></svg></div>
    <div><svg viewBox="0 0 20 20"><path d="M1 7l9-6 9 6v11H1z" fill="#1683d8"/><path d="M3 7h14l-7 6z" fill="#eef8ff"/><path d="M1 7l9 7 9-7v11H1z" fill="#35b2ef"/></svg></div>
    <div class="run"><svg viewBox="0 0 20 20"><circle cx="9" cy="9" r="8.500" fill="#e33b2e"/><path d="M9 9L1.500 5a8.500 8.500 0 0 0 6 12.500z" fill="#36a853"/><path d="M9 9h8.500a8.500 8.500 0 0 1-9 8.500z" fill="#fbc116"/><circle cx="9" cy="9" r="4" fill="#4285f4" stroke="#fff" stroke-width="1.400"/><circle cx="15" cy="14" r="5" fill="#efe5e2"/><path d="M13 13c0-4 5-3 4 0l1 5h-6z" fill="#4a1c22"/></svg></div>
    <div class="teams"><svg viewBox="0 0 20 20"><circle cx="12" cy="4" r="3" fill="#7b83eb"/><circle cx="17" cy="5" r="2" fill="#5059c9"/><path d="M7 8h12v6c-2 5-10 5-12 0z" fill="#6069cf"/><path d="M1 5h10v10H1z" fill="#4b53bc"/><text x="3.500" y="13.200" class="glyph">T</text><circle cx="15" cy="14.500" r="5.500" fill="#c4233f"/><text x="12.300" y="18" class="glyph">7</text></svg></div>
    <div class="run"><svg viewBox="0 0 20 20"><path d="M9 3h9v14H9z" fill="#fff" stroke="#d24726"/><path d="M12 6h4v3h-4zM11 11h6M11 13.500h6" fill="#d24726" stroke="#d24726"/><path d="M1 3l10-2v18L1 17z" fill="#d24726"/><text x="3" y="13.500" class="glyph">P</text></svg></div>
    <div class="active"><svg viewBox="0 0 20 20"><path d="M1 1h18v18H1z" fill="#178b86" stroke="#d9efeb"/><path d="M3 16L7 3h3l3 13h-3L8 7l-3 9z" fill="#fff"/><path d="M12 3v10M15 3v10M6 16h10" stroke="#c3e6df"/><circle cx="14" cy="14" r="2.500" fill="#eef7f6" stroke="#21645f"/></svg></div>
  </div>
  <svg class="systray" viewBox="0 0 90 30" fill="none" stroke="#eee" stroke-width="1.100"><path d="M7 17l4-4 4 4"/><path d="M26 18c-4 0-3-5 0-5 1-4 6-4 7-1 4 0 4 6 0 6z" fill="#1683d8" stroke="none"/><circle cx="32" cy="17" r="3" fill="#d5e8f8" stroke="#1683d8"/><path d="M42.500 12.500h10v5.500h-10z"/><path d="M44 14h7v2.500h-7z" fill="#eee"/><path d="M62 19a9 9 0 0 1 9-7M64.500 19a6 6 0 0 1 6-4.500M67 19a3 3 0 0 1 3-2.500" stroke="#aaa"/><path d="M77 13.500h2L81.500 11v8L79 16.500h-2zM83.500 13q1 2 0 4M85.500 11.500q2 3.500 0 7M87.500 10.500q2.500 4.500 0 9"/></svg>
  <div class="clock"><span>11:38 PM</span><span>12/14/2020</span></div>
  <svg class="note" viewBox="0 0 40 30" fill="none" stroke="#eee" stroke-width="1.100"><path d="M9.500 10h11v8.500h-3.500v2.500l-2.500-2.500h-5z"/><path d="M36 0v30" stroke="#555"/></svg>
</footer>
</body>
</html>
```
FILE: styles.css
```css
* { box-sizing: border-box; }
body { margin: 0; width: 1024px; height: 575px; overflow: hidden; background: #f0f0f0; color: #222; font: 9px/1 "Open Sans", "Noto Sans", sans-serif; display: flex; flex-direction: column; }
i { display: block; flex: none; font-style: normal; }
svg { display: block; flex: none; }
.sprite { position: absolute; width: 0; height: 0; }

.titlebar { height: 17px; flex: none; background: #fff; display: flex; align-items: center; padding-left: 2px; }
.app-icon { width: 11px; height: 11px; margin-right: 4px; }
.title { flex: 1; font-size: 9.3px; letter-spacing: -.4px; white-space: nowrap; color: #111; }
.win-buttons { width: 100px; height: 17px; }

.menubar { height: 15px; flex: none; background: #fff; display: grid; grid-template-columns: 16.500px 24px 25.500px 29px 32px 39.500px 30.500px 30.500px 53.500px 38.500px 40.500px 43px 1fr 44px; align-items: center; padding-left: 6px; letter-spacing: -.2px; color: #111; }
.dwg-icon { width: 11px; height: 12px; }
.mdi { width: 44px; height: 15px; }

.toolbar { display: flex; flex: none; align-items: center; white-space: nowrap; }
.row1 { height: 22px; border-top: 1px solid #e6e6e6; border-bottom: 1px solid #ababab; }
.row2 { height: 21px; border-bottom: 2px solid #777; }
.grip { width: 5px; height: 17px; margin: 0 2px; border: solid #c2c2c2; border-width: 0 1px; background: linear-gradient(90deg, #fff 1px, #f0f0f0 1px 2px, #b5b5b5 2px 3px, #fff 3px); }
.ic { width: 17px; height: 13px; }
.sep { width: 6px; height: 14px; background: linear-gradient(90deg, transparent 2px, #777 2px 3px, transparent 3px); }
.drop { width: 9px; height: 3px; background: #333; clip-path: polygon(25% 0, 75% 0, 50% 100%); }
.drop.off { background: #999; }
.edge { width: 3px; height: 19px; border-right: 1px solid #b0b0b0; }
.combo { height: 16px; border: 1px solid #858585; background: #fff; display: flex; align-items: center; padding-left: 6px; color: #222; letter-spacing: -.5px; }
.combo.soft { border-color: #c9c9c9; }
.row1 .combo { width: 76px; padding-left: 4px; letter-spacing: -.4px; }
.ch { width: 8px; height: 8px; margin: 0 2px 0 auto; color: #444; }
.soft .ch { color: #aaa; }
.ic.st { width: 15px; }
.ws { width: 131px; }
.row2 .ws + .ic { margin-left: 1px; }
.layer { width: 226px; padding-left: 2px; }
.mini { width: 12px; height: 11px; }
.swatch { width: 8px; height: 8px; border: 1px solid #222; background: #fff; margin: 0 3px 0 2px; }
.color { width: 113px; }
.color .swatch { margin-left: -3px; }
.ltype { width: 120px; }
.rule { width: 45px; height: 1px; background: #222; margin: 0 5px 0 -3px; }
.lweight { width: 95px; }
.bar { width: 26px; height: 8px; background: #000; margin: 0 5px 0 -3px; }
.plot { width: 92px; background: #efefef; color: #888; padding-left: 7px; }
.thin { width: 4.500px; background: linear-gradient(90deg, transparent 1px, #888 1px 2px, transparent 2px); }

.work { height: 411px; flex: none; display: flex; }
.palette { flex: none; display: flex; flex-direction: column; align-items: center; }
.palette svg { width: 12px; height: 12px; margin-bottom: 4.500px; }
.left { width: 20px; padding: 2px 2px 0 0; border-right: 1px solid #999; }
.right { width: 21px; padding-top: 2px; border-left: 1px solid #ccc; }
.hgrip { width: 15px; height: 5px; margin-bottom: 2px; border: solid #b5b5b5; border-width: 1px 0; background: linear-gradient(#fff 1px, #eee 1px 2px, #b5b5b5 2px); background-size: 100% 3px; background-repeat: no-repeat; }
.hline { width: 19px; height: 1px; background: #aaa; }
.right .hline { margin-top: 1px; }
.hgrip.second { margin: 2px 0 4.500px; }
.center { width: 983px; flex: none; }
.canvas { width: 983px; height: 394px; background: #000; }
.tabs { width: 983px; height: 17px; }
.tabtext { font-size: 8.500px; fill: #222; }
.tabtext .sel { fill: #fff; }
.wall { fill: none; stroke: #c0c0c0; stroke-width: 1; }
.mid { fill: none; stroke: #d5d5d5; stroke-width: 1; stroke-dasharray: 7 6; }
.dimline { fill: none; stroke: #d0d0d0; stroke-width: 1; }
.dim { fill: #f2f2f2; font: 7.200px "DejaVu Sans", sans-serif; }
.dim text, .room text, .tabtext text { white-space: pre; }
.room { fill: #e8e8e8; stroke: #e8e8e8; stroke-width: .15; font: 4.800px "DejaVu Sans", sans-serif; }
.ucs { fill: none; stroke: #ccc; stroke-width: 1; }
.cursor { fill: none; stroke: #ddd; stroke-width: .9; }

.command { height: 43px; flex: none; border-top: 2px solid #9a9a9a; border-bottom: 1px solid #b0b0b0; display: flex; padding: 6px 5px 3px 3px; position: relative; font: 10px/1 "Liberation Mono", monospace; color: #222; }
.command .grip { height: 31px; margin-right: 2px; }
.cmdbox { flex: 1; border: solid #777; border-width: 2px 0 0 1px; background: #fff; }
.history { height: 16px; border-bottom: 1px solid #999; display: flex; justify-content: space-between; align-items: center; }
.history span { margin-top: -3px; }
.vscroll { width: 16px; height: 15px; background: #f0f0f0; }
.prompt { height: 15px; display: flex; justify-content: space-between; align-items: center; }
.prompt span { display: flex; align-items: center; white-space: pre; }
.caret { display: block; width: 1.500px; height: 12px; background: #000; }
.hscroll { width: 52px; height: 14px; margin-right: 14px; }
.watermark { position: absolute; left: 804px; top: 0; color: rgba(120, 120, 120, .55); font-family: "Open Sans", "Noto Sans", sans-serif; white-space: nowrap; }
.watermark p { margin: 0; }
.w1 { font-size: 13.500px; line-height: 17px; letter-spacing: .5px; }
.w2 { font-size: 10px; line-height: 16px; letter-spacing: .38px; }

.status { height: 16px; flex: none; display: flex; align-items: center; padding-left: 4px; }
.coords { width: 137px; height: 13px; border: 1px solid #bbb; line-height: 12px; padding-left: 1px; letter-spacing: -.53px; white-space: nowrap; }
.modes { display: grid; grid-template-columns: 24.500px 23px 32.500px 30px 31px 37px 24px 21px 21px 32px; column-gap: 2.700px; margin-left: 3px; height: 14px; letter-spacing: -.2px; }
.modes span { border: solid #bbb; border-width: 0 1px 1px 0; line-height: 13px; padding-left: 1px; white-space: nowrap; }
.modes .on { border: solid #555; border-width: 1px 0 0 1px; background: #f7f7f7; line-height: 12px; }
.tray-icons { width: 80px; height: 16px; margin-left: auto; margin-right: -1px; }

.taskbar { height: 30px; flex: none; background: #1b1b1b; display: flex; color: #fff; }
.start { width: 36px; display: flex; align-items: center; justify-content: center; }
.start svg { width: 12px; height: 12px; }
.search { width: 258px; background: #f0f0f0; border: solid #ccc; border-width: 1px 0; display: flex; align-items: center; gap: 8px; padding-left: 9px; color: #444; font-size: 11.300px; letter-spacing: -.43px; }
.search svg { width: 13px; height: 13px; }
.apps { display: flex; }
.apps div { width: 36.750px; display: flex; align-items: center; justify-content: center; border-bottom: 2px solid transparent; }
.apps svg { width: 19px; height: 19px; }
.apps .run { border-image: linear-gradient(90deg, transparent 3px, #76b9ed 3px 33px, transparent 33px) 2; }
.apps .teams { background: #a55f28; border-color: #f57f17; }
.apps .active { background: #4a4a4a; border-color: #76b9ed; }
.glyph { font: bold 9px "Open Sans", sans-serif; fill: #fff; }
.systray { width: 90px; height: 30px; margin-left: auto; }
.clock { width: 50px; display: flex; flex-direction: column; align-items: center; justify-content: center; gap: 4px; font-size: 9px; letter-spacing: -.38px; white-space: nowrap; }
.note { width: 40px; height: 30px; }
```
